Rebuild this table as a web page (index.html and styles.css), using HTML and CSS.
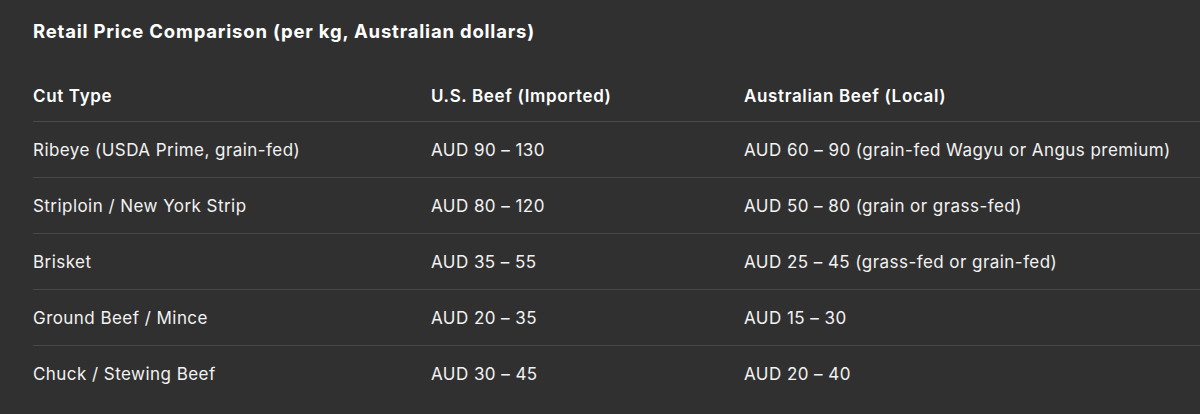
FILE: index.html
```html
<!DOCTYPE html>
<html>
<head>
<meta charset="utf-8">
<link rel="stylesheet" href="styles.css">
</head>
<body>
<div class="page">
  <h2 class="title">Retail Price Comparison (per kg, Australian dollars)</h2>
  <table class="prices">
    <thead>
      <tr><th>Cut Type</th><th>U.S. Beef (Imported)</th><th>Australian Beef (Local)</th></tr>
    </thead>
    <tbody>
      <tr><td>Ribeye (USDA Prime, grain-fed)</td><td>AUD 90 – 130</td><td>AUD 60 – 90 (grain-fed Wagyu or Angus premium)</td></tr>
      <tr><td>Striploin / New York Strip</td><td>AUD 80 – 120</td><td>AUD 50 – 80 (grain or grass-fed)</td></tr>
      <tr><td>Brisket</td><td>AUD 35 – 55</td><td>AUD 25 – 45 (grass-fed or grain-fed)</td></tr>
      <tr><td>Ground Beef / Mince</td><td>AUD 20 – 35</td><td>AUD 15 – 30</td></tr>
      <tr><td>Chuck / Stewing Beef</td><td>AUD 30 – 45</td><td>AUD 20 – 40</td></tr>
    </tbody>
  </table>
</div>
</body>
</html>
```
FILE: styles.css
```css
html, body {
  margin: 0;
  padding: 0;
  background: #303030;
}
body {
  font-family: Inter, "Liberation Sans", sans-serif;
  color: #f2f2f2;
  overflow: hidden;
}
.page {
  padding: 18px 0 0 33px;
}
.title {
  margin: 0;
  font-size: 18.5px;
  font-weight: 700;
  line-height: 26px;
  color: #ffffff;
  letter-spacing: 0.8px;
}
.prices {
  margin-top: 27px;
  width: 100%;
  border-collapse: collapse;
  font-size: 17px;
  table-layout: fixed;
}
.prices th, .prices td {
  text-align: left;
  padding: 0;
}
.prices th {
  font-weight: 600;
  color: #ffffff;
  height: 50px;
  letter-spacing: 0.65px;
  border-bottom: 1px solid #4a4a4a;
}
.prices th:nth-child(1) { width: 398px; }
.prices th:nth-child(2) { width: 313px; }
.prices td {
  font-weight: 400;
  height: 55px;
  letter-spacing: 0.45px;
  border-bottom: 1px solid #474747;
}
.prices tbody tr:last-child td {
  border-bottom: none;
}
```
